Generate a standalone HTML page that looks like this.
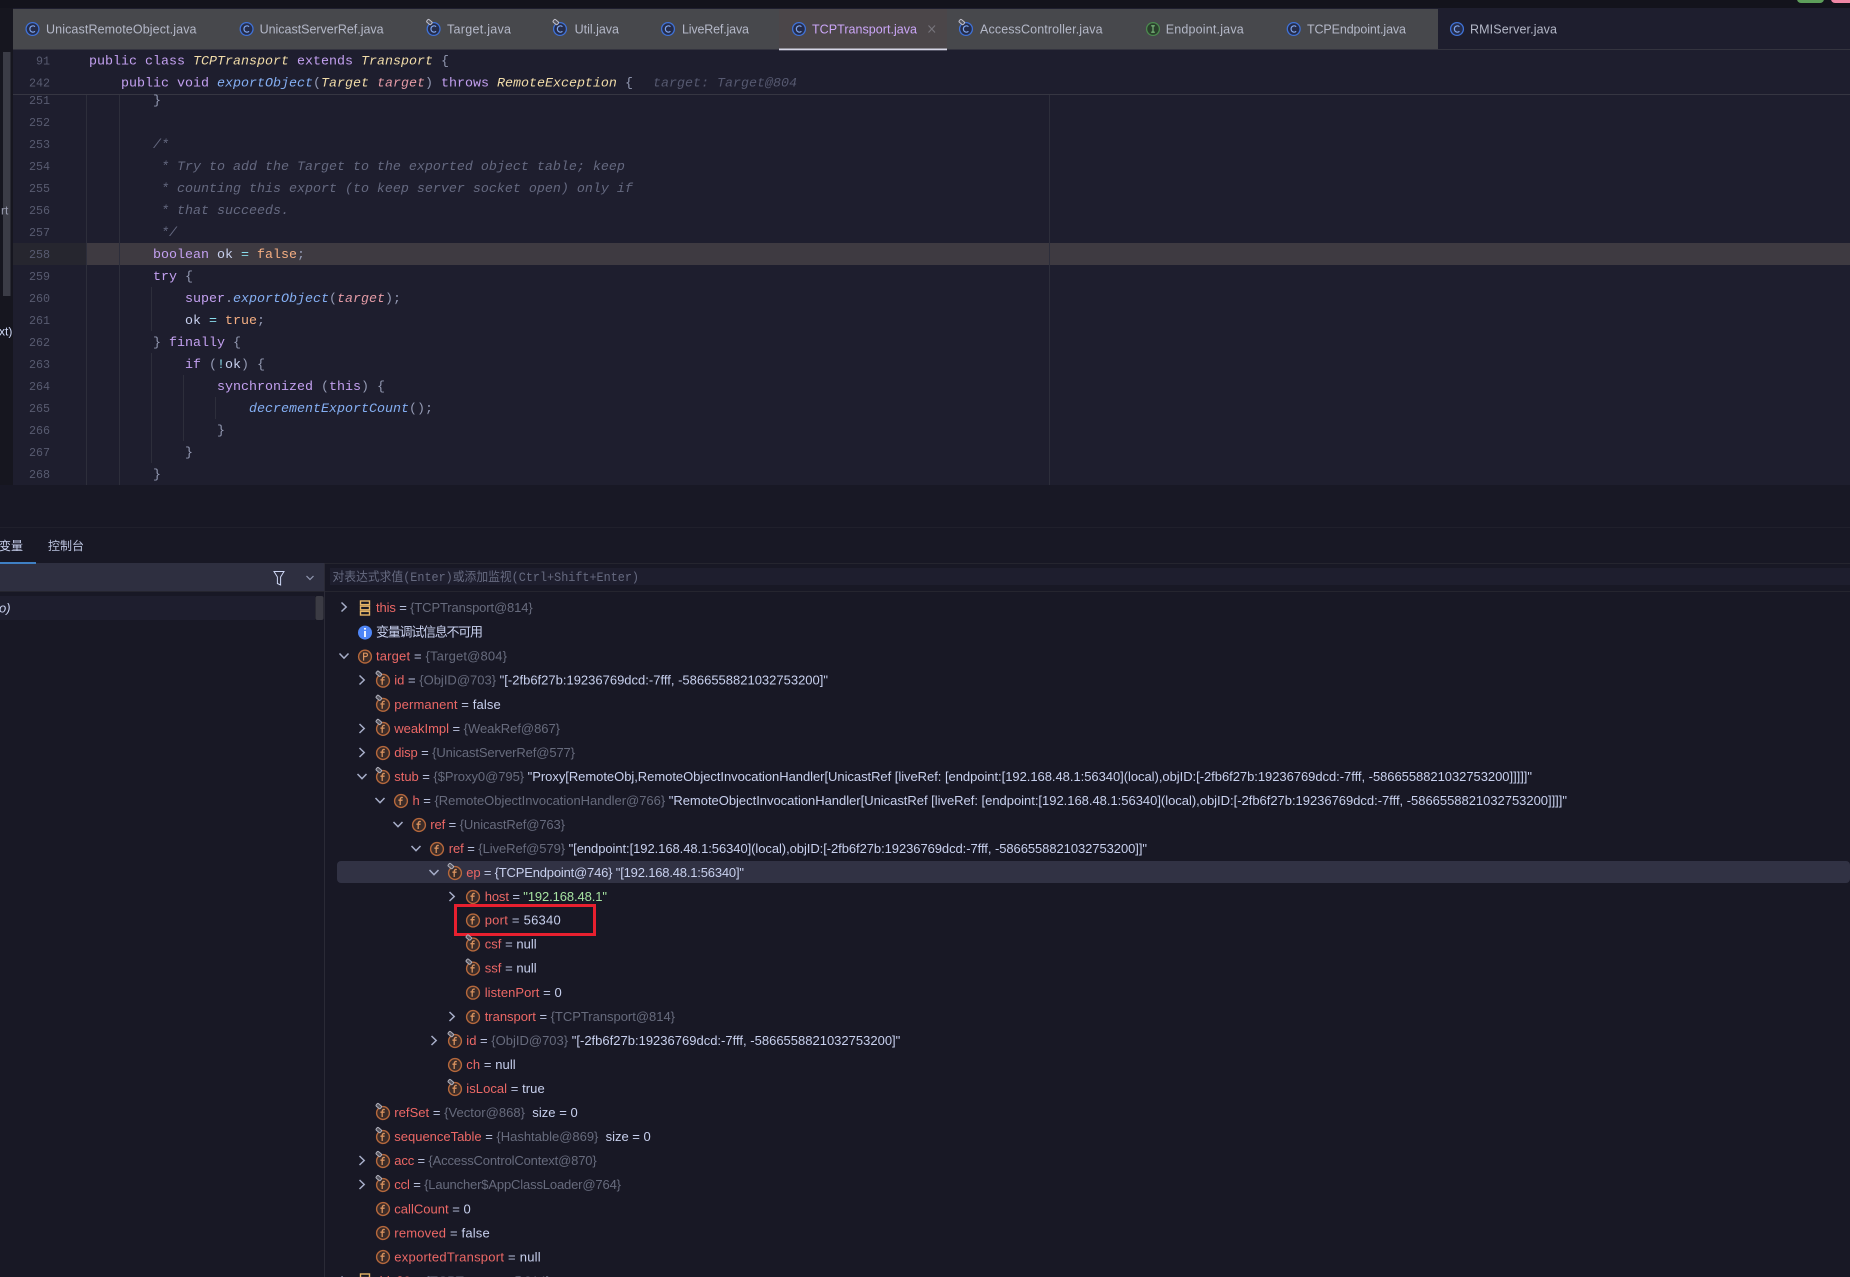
<!DOCTYPE html>
<html><head><meta charset="utf-8"><style>
html,body{margin:0;padding:0;background:#181825;overflow:hidden}
svg{display:block}
text{white-space:pre}
.c{font:13.33px "Liberation Mono","Noto Sans CJK SC",monospace;fill:#c8d0ee;transform:translate(-.7px,-1px)}
.n{font:11.7px "Liberation Mono",monospace;fill:#585b70;text-anchor:end;transform:translateY(-1px)}
.k{fill:#c3a0f0}.t{fill:#f0dba8;font-style:italic}.m{fill:#84aef2;font-style:italic}.p{fill:#e49ba6;font-style:italic}
.b{fill:#9399b2}.cm{fill:#656980;font-style:italic}.o{fill:#89dceb}.f{fill:#f4ae82}.h{fill:#565970;font-style:italic}
.tab{font:12.5px "Liberation Sans",sans-serif;fill:#b4b8c8;transform:translateY(-.5px)}
.r{font:13px "Liberation Sans","Noto Sans CJK SC",sans-serif;fill:#c8d0ee;transform:translateY(-.5px)}
.a{fill:#ec6866}.e{fill:#bac2de}.g{fill:#676b7d}.v{fill:#c8d0ee}.s{fill:#a6e3a1}
.ar{fill:none;stroke:#a6adc8;stroke-width:1.5}
</style></head><body>
<svg xmlns="http://www.w3.org/2000/svg" width="1850" height="1277" viewBox="0 0 1850 1277">
<defs>
<g id="fi"><circle r="6.4" fill="#3a2b28" stroke="#b5683c" stroke-width="1.4"/><path d="M1.8-3.4C.2-3.9-.8-3-.8-1.4V4M-2.6-.8H1.6" fill="none" stroke="#d8925f" stroke-width="1.3"/></g>
<g id="pf"><use href="#fi"/><rect x="-7" y="-8.5" width="5.5" height="3.4" rx="1.2" transform="rotate(40 -4 -6.8)" fill="#55555f" stroke="#b0b0bc" stroke-width="1"/></g>
<g id="pi"><circle r="6.4" fill="#3a2b28" stroke="#b5683c" stroke-width="1.4"/><path d="M-1.4 4V-3.4H.8C3-3.4 3-.1.8-.1H-1.4" fill="none" stroke="#d8925f" stroke-width="1.2"/></g>
<g id="ci"><circle r="6.4" fill="#252c4a" stroke="#3f72d8" stroke-width="1.3"/><path d="M2.4-2.2C1-4-2.6-3.2-2.6 0S1 4 2.4 2.2" fill="none" stroke="#7fa4ea" stroke-width="1.2"/></g>
<g id="cp"><use href="#ci"/><rect x="-7" y="-8.5" width="5.5" height="3.4" rx="1.2" transform="rotate(40 -4 -6.8)" fill="#55555f" stroke="#c0c0cc" stroke-width="1"/></g>
<g id="ii"><circle r="6.4" fill="#2a3f2c" stroke="#4b8a4e" stroke-width="1.3"/><path d="M-1.8-3.2H1.8M0-3.2V3.2M-1.8 3.2H1.8" fill="none" stroke="#7fbf80" stroke-width="1.1"/></g>
<path id="ra" d="M-2.5-4.5 2.2 0-2.5 4.5" class="ar"/>
<path id="da" d="M-4.5-2.5 0 2.2 4.5-2.5" class="ar"/>
<g id="st"><rect x="-4.5" y="-7" width="9" height="3.6" fill="none" stroke="#e5b567" stroke-width="1.4"/><rect x="-4.5" y="-1.8" width="9" height="3.6" fill="none" stroke="#e5b567" stroke-width="1.4"/><rect x="-4.5" y="3.4" width="9" height="3.6" fill="none" stroke="#e5b567" stroke-width="1.4"/></g>
<clipPath id="ed"><rect x="13" y="94" width="1837" height="391"/></clipPath>
</defs>

<rect width="1850" height="1277" fill="#181825"/>
<rect width="1850" height="8" fill="#13131c"/>
<rect x="1797" y="-6" width="27" height="9" rx="4" fill="#5d9e5a"/>
<rect x="1831" y="-6" width="30" height="9" rx="4" fill="#ef87a5"/>

<!-- left strip -->
<rect x="0" y="8" width="13" height="477" fill="#16161f"/>
<rect x="3" y="52" width="7.5" height="244" fill="#3b3c46"/>
<text class="r" x="1" y="215" style="font-size:12px;fill:#9a9db0">rt</text>
<text class="r" x="-1" y="336" style="font-size:12px;fill:#cdd6f4">xt)</text>

<!-- editor -->
<rect x="13" y="8" width="1837" height="477" fill="#1e1e2e"/>
<rect x="13" y="243" width="74" height="22" fill="#26262f"/>
<rect x="87" y="243" width="1763" height="22" fill="#3e3a41"/>
<g stroke="#2d2e3b" stroke-width="1">
<path d="M86.5 94V485M119.5 94V485M1049.5 94V485" />
<path d="M151.5 287V331M151.5 353V463M183.5 375V441M215.5 397V419"/>
</g>

<!-- tabs -->
<rect x="13" y="9" width="1425" height="40" fill="#47484c"/>
<rect x="779" y="9" width="168" height="40" fill="#4b4649"/>
<rect x="13" y="49" width="1837" height="1" fill="#34343f"/>
<rect x="779" y="48.5" width="168" height="1.8" fill="#d5d5e5"/>
<use href="#ci" x="32.5" y="29"/><text class="tab" x="46" y="34" textLength="150.5">UnicastRemoteObject.java</text>
<use href="#ci" x="246.6" y="29"/><text class="tab" x="259.6" y="34" textLength="124">UnicastServerRef.java</text>
<use href="#cp" x="433.6" y="29"/><text class="tab" x="447" y="34" textLength="64">Target.java</text>
<use href="#cp" x="560" y="29"/><text class="tab" x="574.6" y="34" textLength="44.4">Util.java</text>
<use href="#ci" x="668" y="29"/><text class="tab" x="682" y="34" textLength="67">LiveRef.java</text>
<use href="#ci" x="799" y="29"/><text class="tab" x="812" y="34" textLength="105" style="fill:#cba6f7">TCPTransport.java</text>
<path d="M928.5 25.5 935 32.5M935 25.5 928.5 32.5" stroke="#77757c" stroke-width="1.1" fill="none"/>
<use href="#cp" x="966" y="29"/><text class="tab" x="980" y="34" textLength="122.6">AccessController.java</text>
<use href="#ii" x="1153" y="29"/><text class="tab" x="1165.7" y="34" textLength="78">Endpoint.java</text>
<use href="#ci" x="1293.7" y="29"/><text class="tab" x="1307" y="34" textLength="99">TCPEndpoint.java</text>
<use href="#ci" x="1457" y="29"/><text class="tab" x="1470" y="34" textLength="87">RMIServer.java</text>

<!-- sticky -->
<text class="n" x="50" y="65.5">91</text>
<text class="c" x="89.7" y="65.5"><tspan class="k">public class </tspan><tspan class="t">TCPTransport </tspan><tspan class="k">extends </tspan><tspan class="t">Transport </tspan><tspan class="b">{</tspan></text>
<text class="n" x="50" y="87.5">242</text>
<text class="c" x="121.7" y="87.5"><tspan class="k">public void </tspan><tspan class="m">exportObject</tspan><tspan class="b">(</tspan><tspan class="t">Target </tspan><tspan class="p">target</tspan><tspan class="b">) </tspan><tspan class="k">throws </tspan><tspan class="t">RemoteException </tspan><tspan class="b">{</tspan></text>
<text class="c h" x="653.7" y="87.5">target: Target@804</text>
<rect x="13" y="94" width="1837" height="1" fill="#363642"/>

<!-- code -->
<g clip-path="url(#ed)">
<text class="n" x="50" y="105">251</text><text class="c b" x="153.7" y="105">}</text>
<text class="n" x="50" y="127">252</text>
<text class="n" x="50" y="149">253</text><text class="c cm" x="153.7" y="149">/*</text>
<text class="n" x="50" y="171">254</text><text class="c cm" x="153.7" y="171"> * Try to add the Target to the exported object table; keep</text>
<text class="n" x="50" y="193">255</text><text class="c cm" x="153.7" y="193"> * counting this export (to keep server socket open) only if</text>
<text class="n" x="50" y="215">256</text><text class="c cm" x="153.7" y="215"> * that succeeds.</text>
<text class="n" x="50" y="237">257</text><text class="c cm" x="153.7" y="237"> */</text>
<text class="n" x="50" y="259">258</text><text class="c" x="153.7" y="259"><tspan class="k">boolean </tspan>ok <tspan class="o">= </tspan><tspan class="f">false</tspan><tspan class="b">;</tspan></text>
<text class="n" x="50" y="281">259</text><text class="c" x="153.7" y="281"><tspan class="k">try </tspan><tspan class="b">{</tspan></text>
<text class="n" x="50" y="303">260</text><text class="c" x="185.7" y="303"><tspan class="k">super</tspan><tspan class="b">.</tspan><tspan class="m">exportObject</tspan><tspan class="b">(</tspan><tspan class="p">target</tspan><tspan class="b">);</tspan></text>
<text class="n" x="50" y="325">261</text><text class="c" x="185.7" y="325">ok <tspan class="o">= </tspan><tspan class="f">true</tspan><tspan class="b">;</tspan></text>
<text class="n" x="50" y="347">262</text><text class="c" x="153.7" y="347"><tspan class="b">} </tspan><tspan class="k">finally </tspan><tspan class="b">{</tspan></text>
<text class="n" x="50" y="369">263</text><text class="c" x="185.7" y="369"><tspan class="k">if </tspan><tspan class="b">(</tspan><tspan class="o">!</tspan>ok<tspan class="b">) {</tspan></text>
<text class="n" x="50" y="391">264</text><text class="c" x="217.7" y="391"><tspan class="k">synchronized </tspan><tspan class="b">(</tspan><tspan class="k">this</tspan><tspan class="b">) {</tspan></text>
<text class="n" x="50" y="413">265</text><text class="c" x="249.7" y="413"><tspan class="m">decrementExportCount</tspan><tspan class="b">();</tspan></text>
<text class="n" x="50" y="435">266</text><text class="c b" x="217.7" y="435">}</text>
<text class="n" x="50" y="457">267</text><text class="c b" x="185.7" y="457">}</text>
<text class="n" x="50" y="479">268</text><text class="c b" x="153.7" y="479">}</text>
</g>

<!-- bottom panel -->
<rect x="0" y="527" width="1850" height="1" fill="#20202c"/>
<text class="r" x="-1" y="550.5" style="font-size:12px">变量</text>
<text class="r" x="48" y="550.5" style="font-size:12px;fill:#bac2de">控制台</text>
<rect x="0" y="563" width="1850" height="1" fill="#25252f"/>
<rect x="0" y="563" width="324" height="28" fill="#2e2f40"/>
<rect x="0" y="562" width="36" height="2" fill="#3f80c4"/>
<rect x="0" y="591" width="1850" height="1" fill="#25252f"/>
<rect x="324" y="563" width="1" height="714" fill="#2a2a36"/>
<path d="M274 571.5H284L280.6 577V585L277.4 583.5V577Z" fill="none" stroke="#cdd6f4" stroke-width="1"/>
<path d="M306.5 576 310 579.5 313.5 576" fill="none" stroke="#9399b2" stroke-width="1.2"/>
<rect x="0" y="596" width="315" height="24" fill="#1e1e2e"/>
<rect x="315.5" y="596" width="8" height="24" rx="2" fill="#3b3b44"/>
<text class="r" x="-1" y="613" style="font-style:italic">o)</text>
<rect x="330" y="568" width="1520" height="17" fill="#1e1e2e"/>
<text x="332.5" y="581" textLength="306.5" lengthAdjust="spacingAndGlyphs" style="font:12.5px 'Liberation Mono','Noto Sans CJK SC',monospace;fill:#666a80">对表达式求值(Enter)或添加监视(Ctrl+Shift+Enter)</text>

<rect x="337" y="861" width="1513" height="22" rx="4" fill="#313244"/>

<!-- tree -->
<use href="#ra" x="344" y="607"/><use href="#st" x="365" y="608"/>
<text class="r" x="376" y="612.5" textLength="156.7"><tspan class="a">this</tspan><tspan class="e"> = </tspan><tspan class="g">{TCPTransport@814}</tspan></text>

<circle cx="365" cy="632.6" r="7" fill="#4f86f7"/><path d="M365 631V637M365 628V629.6" stroke="#fff" stroke-width="1.8"/>
<text class="r" x="376" y="637" textLength="107">变量调试信息不可用</text>

<use href="#da" x="344" y="656"/><use href="#pi" x="365" y="656.6"/>
<text class="r" x="376" y="661" textLength="131"><tspan class="a">target</tspan><tspan class="e"> = </tspan><tspan class="g">{Target@804}</tspan></text>

<use href="#ra" x="362" y="680"/><use href="#pf" x="383" y="680.7"/>
<text class="r" x="394.3" y="685" textLength="433.7"><tspan class="a">id</tspan><tspan class="e"> = </tspan><tspan class="g">{ObjID@703} </tspan><tspan class="v">"[-2fb6f27b:19236769dcd:-7fff, -5866558821032753200]"</tspan></text>

<use href="#pf" x="383" y="704.8"/>
<text class="r" x="394.3" y="709.3" textLength="106.4"><tspan class="a">permanent</tspan><tspan class="e"> = </tspan><tspan class="v">false</tspan></text>

<use href="#ra" x="362" y="728.5"/><use href="#pf" x="383" y="728.9"/>
<text class="r" x="394.3" y="733.3" textLength="165.7"><tspan class="a">weakImpl</tspan><tspan class="e"> = </tspan><tspan class="g">{WeakRef@867}</tspan></text>

<use href="#ra" x="362" y="752.5"/><use href="#fi" x="383" y="753"/>
<text class="r" x="394.3" y="757.4" textLength="180.7"><tspan class="a">disp</tspan><tspan class="e"> = </tspan><tspan class="g">{UnicastServerRef@577}</tspan></text>

<use href="#da" x="362" y="776.5"/><use href="#pf" x="383" y="777"/>
<text class="r" x="394.3" y="781.5" textLength="1137.7"><tspan class="a">stub</tspan><tspan class="e"> = </tspan><tspan class="g">{$Proxy0@795} </tspan><tspan class="v">"Proxy[RemoteObj,RemoteObjectInvocationHandler[UnicastRef [liveRef: [endpoint:[192.168.48.1:56340](local),objID:[-2fb6f27b:19236769dcd:-7fff, -5866558821032753200]]]]]"</tspan></text>

<use href="#da" x="380" y="800.5"/><use href="#fi" x="401" y="801"/>
<text class="r" x="412.5" y="805.5" textLength="1154.5"><tspan class="a">h</tspan><tspan class="e"> = </tspan><tspan class="g">{RemoteObjectInvocationHandler@766} </tspan><tspan class="v">"RemoteObjectInvocationHandler[UnicastRef [liveRef: [endpoint:[192.168.48.1:56340](local),objID:[-2fb6f27b:19236769dcd:-7fff, -5866558821032753200]]]]"</tspan></text>

<use href="#da" x="398" y="824.5"/><use href="#fi" x="419" y="825"/>
<text class="r" x="430.3" y="829.6" textLength="134.7"><tspan class="a">ref</tspan><tspan class="e"> = </tspan><tspan class="g">{UnicastRef@763}</tspan></text>

<use href="#da" x="416" y="848.5"/><use href="#fi" x="437" y="849"/>
<text class="r" x="448.7" y="853.6" textLength="698.3"><tspan class="a">ref</tspan><tspan class="e"> = </tspan><tspan class="g">{LiveRef@579} </tspan><tspan class="v">"[endpoint:[192.168.48.1:56340](local),objID:[-2fb6f27b:19236769dcd:-7fff, -5866558821032753200]]"</tspan></text>

<use href="#da" x="434" y="872.5"/><use href="#pf" x="455" y="873"/>
<text class="r" x="466.3" y="877.7" textLength="277.7"><tspan class="a">ep</tspan><tspan class="e"> = </tspan><tspan class="v">{TCPEndpoint@746} "[192.168.48.1:56340]"</tspan></text>

<use href="#ra" x="452" y="896.5"/><use href="#fi" x="473" y="897"/>
<text class="r" x="484.7" y="901.7" textLength="122.3"><tspan class="a">host</tspan><tspan class="e"> = </tspan><tspan class="s">"192.168.48.1"</tspan></text>

<use href="#fi" x="473" y="920.5"/>
<text class="r" x="484.7" y="925.2" textLength="76"><tspan class="a">port</tspan><tspan class="e"> = </tspan><tspan class="v">56340</tspan></text>
<rect x="455.5" y="905.5" width="139" height="29" fill="none" stroke="#e8202f" stroke-width="3"/>

<use href="#pf" x="473" y="944.5"/>
<text class="r" x="484.7" y="949.2" textLength="52"><tspan class="a">csf</tspan><tspan class="e"> = </tspan><tspan class="v">null</tspan></text>

<use href="#pf" x="473" y="968.6"/>
<text class="r" x="484.7" y="973.2" textLength="52"><tspan class="a">ssf</tspan><tspan class="e"> = </tspan><tspan class="v">null</tspan></text>

<use href="#fi" x="473" y="992.7"/>
<text class="r" x="484.7" y="997.3" textLength="77"><tspan class="a">listenPort</tspan><tspan class="e"> = </tspan><tspan class="v">0</tspan></text>

<use href="#ra" x="452" y="1016.5"/><use href="#fi" x="473" y="1017"/>
<text class="r" x="484.7" y="1021.4" textLength="190.3"><tspan class="a">transport</tspan><tspan class="e"> = </tspan><tspan class="g">{TCPTransport@814}</tspan></text>

<use href="#ra" x="434" y="1040.5"/><use href="#pf" x="455" y="1041"/>
<text class="r" x="466.3" y="1045.5" textLength="434"><tspan class="a">id</tspan><tspan class="e"> = </tspan><tspan class="g">{ObjID@703} </tspan><tspan class="v">"[-2fb6f27b:19236769dcd:-7fff, -5866558821032753200]"</tspan></text>

<use href="#fi" x="455" y="1065"/>
<text class="r" x="466.3" y="1069.5" textLength="49.4"><tspan class="a">ch</tspan><tspan class="e"> = </tspan><tspan class="v">null</tspan></text>

<use href="#pf" x="455" y="1089"/>
<text class="r" x="466.3" y="1093.5" textLength="78.4"><tspan class="a">isLocal</tspan><tspan class="e"> = </tspan><tspan class="v">true</tspan></text>

<use href="#pf" x="383" y="1113"/>
<text class="r" x="394.3" y="1117.5" textLength="183.4"><tspan class="a">refSet</tspan><tspan class="e"> = </tspan><tspan class="g">{Vector@868}  </tspan><tspan class="v">size = 0</tspan></text>

<use href="#pf" x="383" y="1137"/>
<text class="r" x="394.3" y="1141.6" textLength="256.4"><tspan class="a">sequenceTable</tspan><tspan class="e"> = </tspan><tspan class="g">{Hashtable@869}  </tspan><tspan class="v">size = 0</tspan></text>

<use href="#ra" x="362" y="1160.5"/><use href="#pf" x="383" y="1161"/>
<text class="r" x="394.3" y="1165.7" textLength="202.4"><tspan class="a">acc</tspan><tspan class="e"> = </tspan><tspan class="g">{AccessControlContext@870}</tspan></text>

<use href="#ra" x="362" y="1184.5"/><use href="#pf" x="383" y="1185"/>
<text class="r" x="394.3" y="1189.7" textLength="226.7"><tspan class="a">ccl</tspan><tspan class="e"> = </tspan><tspan class="g">{Launcher$AppClassLoader@764}</tspan></text>

<use href="#fi" x="383" y="1209"/>
<text class="r" x="394.3" y="1213.8" textLength="76.4"><tspan class="a">callCount</tspan><tspan class="e"> = </tspan><tspan class="v">0</tspan></text>

<use href="#fi" x="383" y="1233"/>
<text class="r" x="394.3" y="1237.8" textLength="95.4"><tspan class="a">removed</tspan><tspan class="e"> = </tspan><tspan class="v">false</tspan></text>

<use href="#fi" x="383" y="1257"/>
<text class="r" x="394.3" y="1261.9" textLength="146.4"><tspan class="a">exportedTransport</tspan><tspan class="e"> = </tspan><tspan class="v">null</tspan></text>

<use href="#ra" x="344" y="1281"/><use href="#st" x="365" y="1281"/>
<text class="r" x="376" y="1286"><tspan class="a">this$0</tspan><tspan class="e"> = </tspan><tspan class="g">{TCPTransport@814}</tspan></text>
</svg>
</body></html>
